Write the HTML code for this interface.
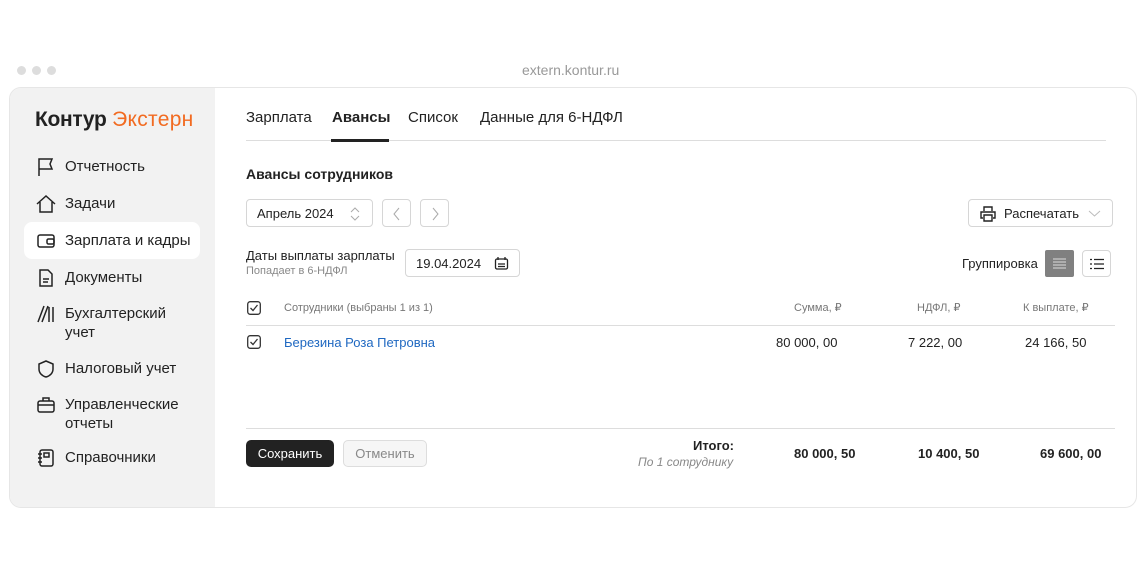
<!DOCTYPE html>
<html><head><meta charset="utf-8"><style>
*{margin:0;padding:0;box-sizing:border-box}
body{width:1146px;height:570px;background:#fff;font-family:"Liberation Sans",sans-serif;color:#222;position:relative;overflow:hidden}
.a{position:absolute;white-space:nowrap}
.dot{position:absolute;top:66px;width:9px;height:9px;border-radius:50%;background:#ddd}
.win{position:absolute;left:9px;top:87px;width:1128px;height:421px;border:1px solid #e6e6e6;border-radius:12px;overflow:hidden}
.side{position:absolute;left:0;top:0;width:205px;height:100%;background:#f2f2f2}
.nav{position:absolute;left:26px;font-size:15px;color:#222;line-height:19px}
.nav svg{position:absolute;left:-29px;top:0}
.btn{position:absolute;border:1px solid #d6d6d6;border-radius:4px;background:#fff}
.hd{font-size:11px;color:#777;line-height:14px}
</style></head><body>
<div class="dot" style="left:17px"></div><div class="dot" style="left:32px"></div><div class="dot" style="left:47px"></div>
<div class="a" style="left:522px;top:62px;font-size:14px;color:#999">extern.kontur.ru</div>
<div class="win">
<div class="side">
<div class="a" style="left:25px;top:20px;font-size:21px;font-weight:bold;letter-spacing:-0.3px">Контур <span style="color:#f26b21;font-weight:normal;letter-spacing:0.3px">Экстерн</span></div>
<div class="a" style="left:14px;top:134px;width:176px;height:37px;background:#fff;border-radius:8px"></div>
<div class="nav" style="left:55px;top:69px"><svg width="20" height="20" viewBox="0 0 20 20" fill="none" stroke="#222" stroke-width="1.5"><path d="M3 19V2h13l-2 5 2 5H3"/></svg>Отчетность</div>
<div class="nav" style="left:55px;top:106px"><svg width="20" height="20" viewBox="0 0 20 20" fill="none" stroke="#222" stroke-width="1.5"><path d="M1 10l9-8 9 8M4 8v10h12V8"/></svg>Задачи</div>
<div class="nav" style="left:55px;top:143px"><svg width="20" height="20" viewBox="0 0 20 20" fill="none" stroke="#222" stroke-width="1.5"><rect x="2" y="4" width="16" height="12" rx="2"/><rect x="11" y="8" width="7" height="5" rx="1.5"/></svg>Зарплата и кадры</div>
<div class="nav" style="left:55px;top:180px"><svg width="20" height="20" viewBox="0 0 20 20" fill="none" stroke="#222" stroke-width="1.5"><path d="M4 2h8l4 4v12H4zM7 11h6M7 14h5"/></svg>Документы</div>
<div class="nav" style="left:55px;top:216px"><svg width="20" height="20" viewBox="0 0 20 20" fill="none" stroke="#222" stroke-width="1.5"><path d="M2 18L8 2M6 18L12 2M13 3v15M17 3v15"/></svg>Бухгалтерский<br>учет</div>
<div class="nav" style="left:55px;top:271px"><svg width="20" height="20" viewBox="0 0 20 20" fill="none" stroke="#222" stroke-width="1.5"><path d="M10 2l7 3v5c0 4-3 7-7 8-4-1-7-4-7-8V5z"/></svg>Налоговый учет</div>
<div class="nav" style="left:55px;top:307px"><svg width="20" height="20" viewBox="0 0 20 20" fill="none" stroke="#222" stroke-width="1.5"><rect x="2" y="6" width="16" height="11" rx="2"/><path d="M7 6V3h6v3M2 10h16"/></svg>Управленческие<br>отчеты</div>
<div class="nav" style="left:55px;top:360px"><svg width="20" height="20" viewBox="0 0 20 20" fill="none" stroke="#222" stroke-width="1.5"><rect x="4" y="2" width="13" height="16" rx="2"/><rect x="8" y="5" width="5" height="4"/><path d="M2 6h4M2 10h4M2 14h4"/></svg>Справочники</div>
</div>
</div>
<div class="a" style="left:246px;top:109px;font-size:15px">Зарплата</div>
<div class="a" style="left:332px;top:109px;font-size:15px;font-weight:bold">Авансы</div>
<div class="a" style="left:408px;top:109px;font-size:15px">Список</div>
<div class="a" style="left:480px;top:109px;font-size:15px">Данные для 6-НДФЛ</div>
<div class="a" style="left:246px;top:140px;width:860px;height:1px;background:#ddd"></div>
<div class="a" style="left:331px;top:139px;width:58px;height:3px;background:#222"></div>
<div class="a" style="left:246px;top:166px;font-size:14px;font-weight:bold">Авансы сотрудников</div>
<div class="btn" style="left:246px;top:199px;width:127px;height:28px"><span class="a" style="left:10px;top:6px;font-size:13px">Апрель 2024</span><svg class="a" style="left:102px;top:6px" width="12" height="16" viewBox="0 0 12 16" fill="none" stroke="#aaa"><path d="M2 6l4-4 4 4M2 10l4 4 4-4"/></svg></div>
<div class="btn" style="left:382px;top:199px;width:29px;height:28px"><svg class="a" style="left:9px;top:7px" width="10" height="14" fill="none" stroke="#aaa"><path d="M7 1L2 7l5 6"/></svg></div>
<div class="btn" style="left:420px;top:199px;width:29px;height:28px"><svg class="a" style="left:10px;top:7px" width="10" height="14" fill="none" stroke="#aaa"><path d="M2 1l5 6-5 6"/></svg></div>
<div class="btn" style="left:968px;top:199px;width:145px;height:28px"><svg class="a" style="left:10px;top:5px" width="18" height="17" fill="none" stroke="#222" stroke-width="1.4"><path d="M5 6V2h8v4M4 13H2V7h14v6h-2M5 10h8v6H5z"/></svg><span class="a" style="left:35px;top:6px;font-size:13px">Распечатать</span><svg class="a" style="left:119px;top:9px" width="13" height="9" fill="none" stroke="#bbb"><path d="M1 2l5.5 5L12 2"/></svg></div>
<div class="a" style="left:246px;top:248px;font-size:13px">Даты выплаты зарплаты</div>
<div class="a hd" style="left:246px;top:264px;font-size:11px;color:#888">Попадает в 6-НДФЛ</div>
<div class="btn" style="left:405px;top:249px;width:115px;height:28px"><span class="a" style="left:10px;top:6px;font-size:13px">19.04.2024</span><svg class="a" style="left:88px;top:6px" width="15" height="15" fill="none" stroke="#222" stroke-width="1.3"><rect x="1.5" y="3" width="12" height="10" rx="1.5"/><path d="M4 1v3M11 1v3M4 8h7M4 10.5h7"/></svg></div>
<div class="a" style="left:962px;top:256px;font-size:13px">Группировка</div>
<div class="a" style="left:1045px;top:250px;width:29px;height:27px;background:#808080;border-radius:2px"><svg class="a" style="left:8px;top:8px" width="13" height="11" stroke="#ddd"><path d="M0 1h13M0 4h13M0 7h13M0 10h13"/></svg></div>
<div class="btn" style="left:1082px;top:250px;width:29px;height:27px"><svg class="a" style="left:7px;top:7px" width="14" height="12" stroke="#222" stroke-width="1.3"><path d="M0 1.5h2M0 6h2M0 10.5h2M4 1.5h10M4 6h10M4 10.5h10"/></svg></div>
<svg class="a" style="left:247px;top:301px" width="14" height="14" fill="none" stroke="#333" stroke-width="1.3"><rect x=".7" y=".7" width="12.6" height="12.6" rx="2.5"/><path d="M3.5 7l2.5 2.5L10.5 4"/></svg>
<div class="a hd" style="left:284px;top:301px">Сотрудники (выбраны 1 из 1)</div>
<div class="a hd" style="left:794px;top:301px">Сумма, ₽</div>
<div class="a hd" style="left:917px;top:301px">НДФЛ, ₽</div>
<div class="a hd" style="left:1023px;top:301px">К выплате, ₽</div>
<div class="a" style="left:246px;top:325px;width:869px;height:1px;background:#ddd"></div>
<svg class="a" style="left:247px;top:335px" width="14" height="14" fill="none" stroke="#333" stroke-width="1.3"><rect x=".7" y=".7" width="12.6" height="12.6" rx="2.5"/><path d="M3.5 7l2.5 2.5L10.5 4"/></svg>
<div class="a" style="left:284px;top:335px;font-size:13px;color:#1f68c1">Березина Роза Петровна</div>
<div class="a" style="left:776px;top:335px;font-size:13px">80 000, 00</div>
<div class="a" style="left:908px;top:335px;font-size:13px">7 222, 00</div>
<div class="a" style="left:1025px;top:335px;font-size:13px">24 166, 50</div>
<div class="a" style="left:246px;top:428px;width:869px;height:1px;background:#ddd"></div>
<div class="a" style="left:246px;top:440px;width:88px;height:27px;background:#222;border-radius:5px;color:#fff;font-size:13px;text-align:center;line-height:27px">Сохранить</div>
<div class="a" style="left:343px;top:440px;width:84px;height:27px;background:#f6f6f6;border:1px solid #ddd;border-radius:5px;color:#888;font-size:13px;text-align:center;line-height:25px">Отменить</div>
<div class="a" style="left:693px;top:438px;font-size:13px;font-weight:bold">Итого:</div>
<div class="a" style="left:638px;top:455px;font-size:12px;font-style:italic;color:#888">По 1 сотруднику</div>
<div class="a" style="left:794px;top:446px;font-size:13px;font-weight:bold">80 000, 50</div>
<div class="a" style="left:918px;top:446px;font-size:13px;font-weight:bold">10 400, 50</div>
<div class="a" style="left:1040px;top:446px;font-size:13px;font-weight:bold">69 600, 00</div>
</body></html>
